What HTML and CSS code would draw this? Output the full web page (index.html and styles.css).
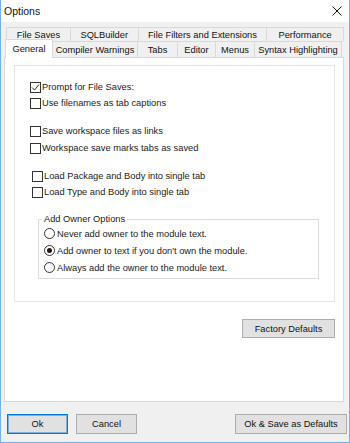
FILE: index.html
```html
<!DOCTYPE html>
<html lang="en">
<head>
    <meta charset="UTF-8">
    <title>Options</title>
    <link rel="stylesheet" href="styles.css">
</head>
<body>
    <div class="window">
        <div class="titlebar">
            <span class="title">Options</span>
            <svg class="close" width="10" height="10" viewBox="0 0 10 10">
                <path d="M0.5 0.5 L9.5 9.5 M9.5 0.5 L0.5 9.5" stroke="#111" stroke-width="1" fill="none"/>
            </svg>
        </div>

        <div class="client">
            <div class="tabctl">
                <div class="tabrow tabrow-top">
                    <div class="tab">File Saves</div>
                    <div class="tab">SQLBuilder</div>
                    <div class="tab">File Filters and Extensions</div>
                    <div class="tab">Performance</div>
                </div>
                <div class="tabrow tabrow-bottom">
                    <div class="tab active">General</div>
                    <div class="tab">Compiler Warnings</div>
                    <div class="tab">Tabs</div>
                    <div class="tab">Editor</div>
                    <div class="tab">Menus</div>
                    <div class="tab">Syntax Highlighting</div>
                </div>

                <div class="page">
                    <div class="box">
                        <div class="group">
                            <label class="chk"><span class="mark checked">
                                <svg width="9" height="9" viewBox="0 0 9 9"><path d="M1 4.5 L3.5 7 L8 1.5" stroke="#222" stroke-width="1" fill="none"/></svg>
                            </span>Prompt for File Saves:</label>
                            <label class="chk"><span class="mark"></span>Use filenames as tab captions</label>
                        </div>
                        <div class="group group-spaced">
                            <label class="chk"><span class="mark"></span>Save workspace files as links</label>
                            <label class="chk"><span class="mark"></span>Workspace save marks tabs as saved</label>
                        </div>
                        <div class="group group-indent">
                            <label class="chk"><span class="mark"></span>Load Package and Body into single tab</label>
                            <label class="chk"><span class="mark"></span>Load Type and Body into single tab</label>
                        </div>

                        <fieldset class="owner">
                            <legend>Add Owner Options</legend>
                            <label class="radio"><span class="dot"></span>Never add owner to the module text.</label>
                            <label class="radio"><span class="dot on"></span>Add owner to text if you don't own the module.</label>
                            <label class="radio"><span class="dot"></span>Always add the owner to the module text.</label>
                        </fieldset>
                    </div>

                    <div class="factory-row">
                        <button class="btn factory">Factory Defaults</button>
                    </div>
                </div>
            </div>

            <div class="buttons">
                <button class="btn ok">Ok</button>
                <button class="btn cancel">Cancel</button>
                <button class="btn save-defaults">Ok &amp; Save as Defaults</button>
            </div>
        </div>
    </div>
</body>
</html>
```

FILE: styles.css
```css
body {
    margin: 0;
    font-family: 'Liberation Sans', Arial, sans-serif;
    font-size: 9.3px;
    color: #1a1a1a;
    background-color: #fff;
}

.window {
    width: 350px;
    height: 443px;
    box-sizing: border-box;
    border: 1px solid #72b1e9;
    border-top: none;
    display: flex;
    flex-direction: column;
    background-color: #f0f0f0;
}

.titlebar {
    height: 22px;
    background-color: #fff;
    display: flex;
    align-items: center;
    justify-content: space-between;
    padding: 0 7px 0 3px;
    flex: none;
}

.title {
    font-size: 10.5px;
    color: #111;
}

.close {
    margin-top: -1px;
}

.client {
    flex: 1;
    padding: 5px 0 0 3px;
}

.tabctl {
    width: 340px;
}

.tabrow {
    display: flex;
    position: relative;
}

.tabrow-top {
    height: 14px;
    padding-left: 2px;
}

.tabrow-bottom {
    height: 16px;
    padding-left: 1px;
}

.tab {
    box-sizing: border-box;
    border: 1px solid #d9d9d9;
    border-bottom: none;
    margin-left: -1px;
    background-color: #f0f0f0;
    display: flex;
    align-items: center;
    justify-content: center;
    white-space: nowrap;
    color: #111;
}

.tabrow-top .tab:nth-child(1) { width: 65px; margin-left: 0; }
.tabrow-top .tab:nth-child(2) { width: 69px; }
.tabrow-top .tab:nth-child(3) { width: 130px; }
.tabrow-top .tab:nth-child(4) { width: 78px; }

.tabrow-bottom .tab:nth-child(1) { width: 48px; margin-left: 0; }
.tabrow-bottom .tab:nth-child(2) { width: 86px; }
.tabrow-bottom .tab:nth-child(3) { width: 41px; }
.tabrow-bottom .tab:nth-child(4) { width: 39px; }
.tabrow-bottom .tab:nth-child(5) { width: 40px; }
.tabrow-bottom .tab:nth-child(6) { width: 88px; }

.tab.active {
    background-color: #fff;
    height: 19px;
    margin-top: -2px;
    position: relative;
    z-index: 2;
    padding-bottom: 1px;
}

.page {
    box-sizing: border-box;
    height: 345px;
    border: 1px solid #d9d9d9;
    background-color: #fff;
    padding: 7px 8px 0 9px;
}

.box {
    box-sizing: border-box;
    height: 237px;
    border: 1px solid #e3e3e3;
    padding: 13px 0 0 15px;
}

.group {
    margin-bottom: 12px;
}

.group-spaced {
    display: flex;
    flex-direction: column;
    gap: 1px;
}

.group-indent {
    padding-left: 2px;
    margin-bottom: 0;
}

.chk,
.radio {
    display: flex;
    align-items: center;
    height: 16px;
    white-space: nowrap;
}

.mark {
    box-sizing: border-box;
    width: 11px;
    height: 11px;
    border: 1px solid #333;
    background-color: #fff;
    margin-right: 1px;
    display: flex;
    align-items: center;
    justify-content: center;
    flex: none;
}

.owner {
    margin: 13px 0 0 8px;
    width: 281px;
    box-sizing: border-box;
    border: 1px solid #dcdcdc;
    padding: 0 0 2px 5px;
}

.owner legend {
    padding: 0 2px;
    margin-left: -2px;
    line-height: 12px;
}

.radio {
    height: 17px;
}

.dot {
    box-sizing: border-box;
    width: 11px;
    height: 11px;
    border: 1px solid #333;
    border-radius: 50%;
    background-color: #fff;
    margin-right: 2px;
    display: flex;
    align-items: center;
    justify-content: center;
    flex: none;
}

.dot.on::after {
    content: '';
    width: 5px;
    height: 5px;
    border-radius: 50%;
    background-color: #1a1a1a;
}

.factory-row {
    display: flex;
    justify-content: flex-end;
    margin-top: 17px;
}

.btn {
    box-sizing: border-box;
    height: 20px;
    font-family: inherit;
    font-size: 9.3px;
    color: #111;
    background-color: #e1e1e1;
    border: 1px solid #adadad;
    padding: 0;
    margin: 0;
}

.factory {
    width: 93px;
    height: 19px;
}

.buttons {
    display: flex;
    margin-top: 12px;
    padding-left: 3px;
    width: 340px;
}

.ok {
    width: 61px;
    border-color: #0078d7;
    box-shadow: inset 0 0 0 1px rgba(0, 120, 215, 0.45);
}

.cancel {
    width: 61px;
    margin-left: 8px;
}

.save-defaults {
    width: 112px;
    margin-left: auto;
}
```
